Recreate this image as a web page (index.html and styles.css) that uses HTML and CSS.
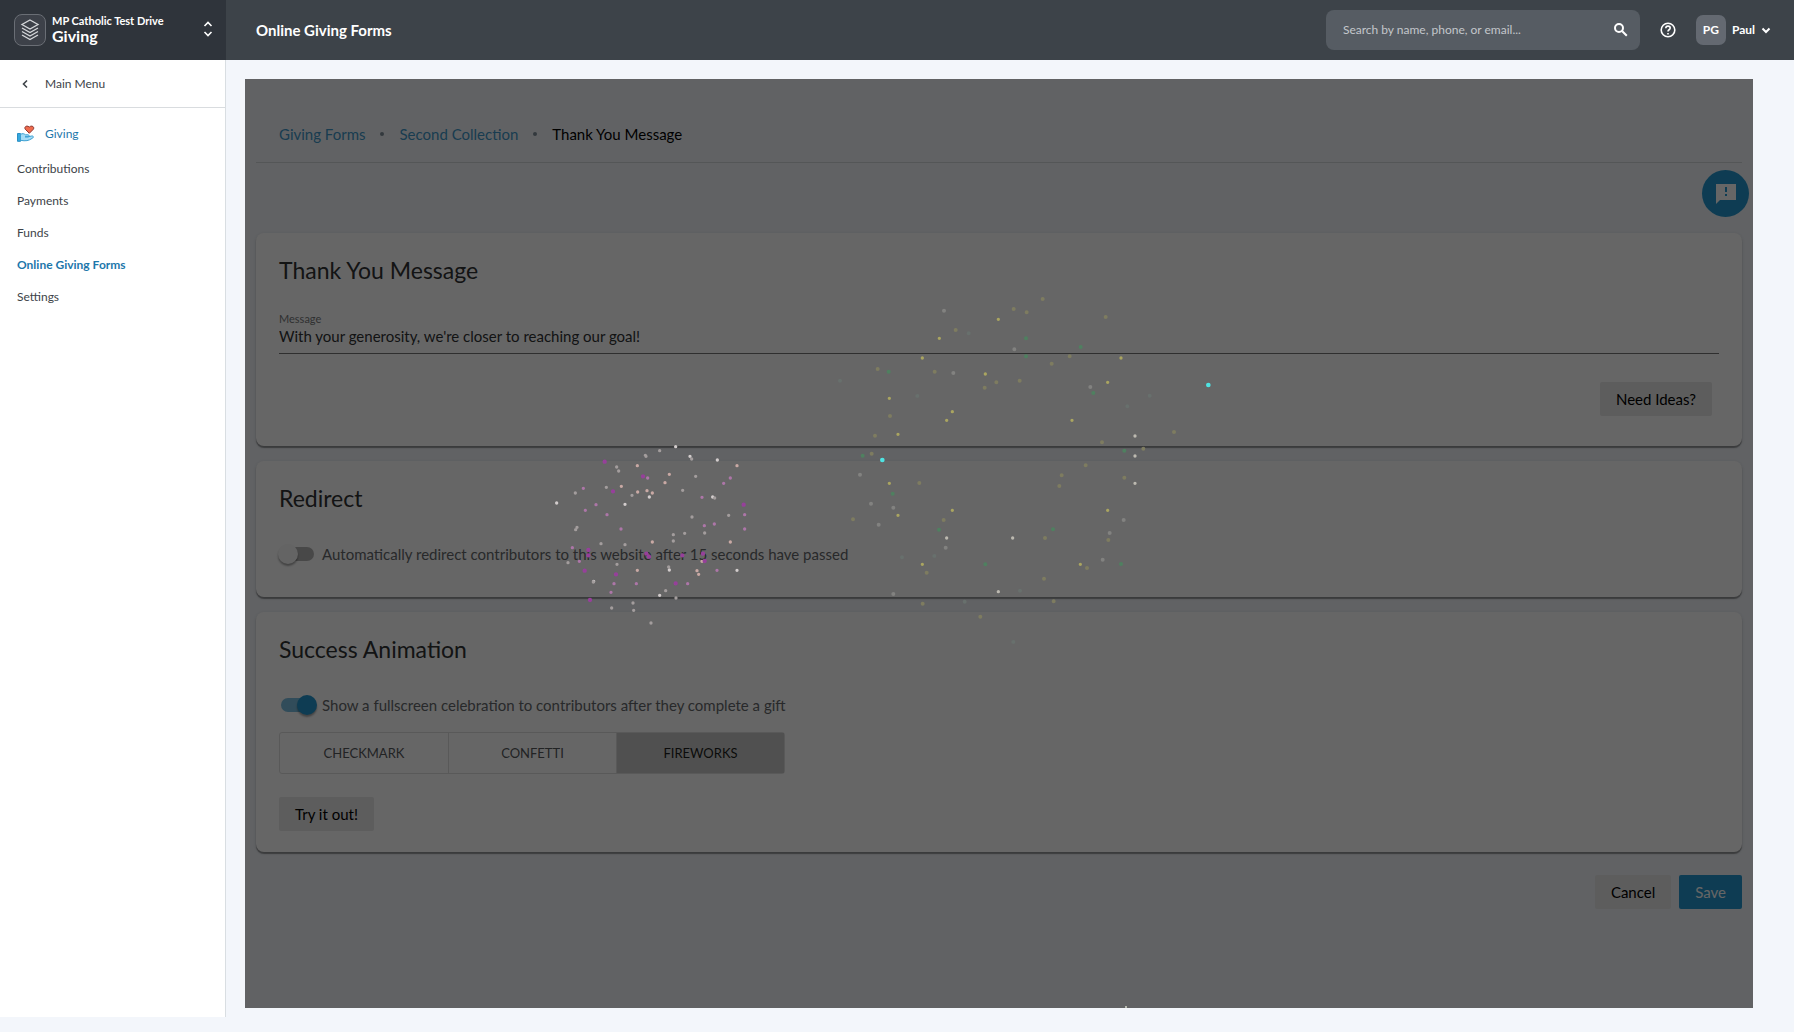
FILE: index.html
```html
<!DOCTYPE html>
<html lang="en">
<head>
<meta charset="utf-8">
<title>Online Giving Forms</title>
<meta name="viewport" content="width=device-width, initial-scale=1">
<link rel="stylesheet" href="styles.css">
</head>
<body>
<header class="topbar">
  <button class="switcher" type="button">
    <span class="switcher-logo">
      <svg width="20" height="24" viewBox="0 0 20 24" aria-hidden="true"><path d="M10 2 18 6.500 10 11 2 6.500ZM2 10l8 4.500 8-4.500M2 13.500l8 4.500 8-4.500M2 17l8 4.500 8-4.500"/></svg>
    </span>
    <span class="switcher-text"><span class="switcher-org">MP Catholic Test Drive</span><span class="switcher-app">Giving</span></span>
    <svg class="switcher-arrows" width="10" height="16" viewBox="0 0 10 16" aria-hidden="true"><path d="M1.500 5 5 1.500 8.500 5M1.500 11 5 14.500 8.500 11"/></svg>
  </button>
  <h1 class="topbar-title">Online Giving Forms</h1>
  <form class="search" role="search">
    <input class="search-input" type="search" aria-label="Search" placeholder="Search by name, phone, or email...">
    <button class="icon-button" type="submit" aria-label="Search">
      <svg width="14" height="14" viewBox="0 0 14 14" aria-hidden="true"><circle cx="5" cy="5" r="4"/><path d="m8.300 8.300 4.500 4.500"/></svg>
    </button>
  </form>
  <button class="icon-button help" type="button" aria-label="Help">
    <svg width="16" height="16" viewBox="0 0 16 16" aria-hidden="true"><circle cx="8" cy="8" r="6.800"/><path d="M5.800 6.300c0-3 4.400-2.800 4.400-.2C10.200 7.700 8 7.800 8 9.400M8 11v1.600"/></svg>
  </button>
  <button class="account" type="button">
    <span class="avatar">PG</span>
    <span class="account-name">Paul</span>
    <svg width="10" height="7" viewBox="0 0 10 7" aria-hidden="true"><path d="m1.500 1.500 3.500 3.500 3.500-3.500"/></svg>
  </button>
</header>
<div class="layout">
  <nav class="sidebar" aria-label="Giving">
    <a class="main-menu" href="#menu">
      <svg width="18" height="10" viewBox="0 0 18 10" aria-hidden="true"><path d="M10 1.500 6.500 5 10 8.500"/></svg>
      <span>Main Menu</span>
    </a>
    <a class="section-link" href="#giving">
      <svg width="18" height="18" viewBox="0 0 18 18" aria-hidden="true">
        <path d="M12.300 8.300 8.200 4.200C6.800 2 9.800-.3 12.300 2.100 14.800-.3 17.800 2 16.400 4.200Z" fill="#ef6a4c" stroke="#8b3a34"/>
        <path d="M.5 8.500h3v7.800h-3Z" fill="#35a8df" stroke="#2a8fc4"/>
        <path d="M3.500 9.500c2-1.500 3.500-.8 5 .3h2.500c1.500 0 1.500 2-.2 2H8h3.200l3.300-.8c2-.4 2.600 1.400.8 2.300-3.800 2.500-6.500 3-11.800 2Z" fill="#a5dcf6" stroke="#3a9fd2"/>
      </svg>
      <span>Giving</span>
    </a>
    <ul class="menu">
      <li><a href="#contributions">Contributions</a></li>
      <li><a href="#payments">Payments</a></li>
      <li><a href="#funds">Funds</a></li>
      <li><a class="is-active" href="#forms" aria-current="page">Online Giving Forms</a></li>
      <li><a href="#settings">Settings</a></li>
    </ul>
  </nav>
  <main class="content">
    <div class="frame">
      <nav class="crumbs" aria-label="Breadcrumb">
        <a href="#forms">Giving Forms</a>
        <span class="crumb-dot"></span>
        <a href="#second">Second Collection</a>
        <span class="crumb-dot"></span>
        <span class="crumb-current">Thank You Message</span>
      </nav>
      <button class="feedback" type="button" aria-label="Send feedback">
        <svg width="20" height="20" viewBox="0 0 20 20" aria-hidden="true"><path fill-rule="evenodd" d="M0 0h20v16H4l-4 4ZM9 3v5h2V3ZM9 10v2h2v-2Z"/></svg>
      </button>
      <form class="cards">
        <section class="card">
          <h2>Thank You Message</h2>
          <label class="field"><span>Message</span><input type="text" value="With your generosity, we're closer to reaching our goal!"></label>
          <div class="card-actions"><button class="button" type="button">Need Ideas?</button></div>
        </section>
        <section class="card">
          <h2>Redirect</h2>
          <label class="toggle"><input type="checkbox" role="switch"><span>Automatically redirect contributors to this website after 15 seconds have passed</span></label>
        </section>
        <section class="card">
          <h2>Success Animation</h2>
          <label class="toggle"><input type="checkbox" role="switch" checked><span>Show a fullscreen celebration to contributors after they complete a gift</span></label>
          <div class="segments" role="radiogroup" aria-label="Animation">
            <label><input type="radio" name="animation"><span>CHECKMARK</span></label>
            <label><input type="radio" name="animation"><span>CONFETTI</span></label>
            <label><input type="radio" name="animation" checked><span>FIREWORKS</span></label>
          </div>
          <button class="button" type="button">Try it out!</button>
        </section>
        <div class="form-actions">
          <button class="button" type="button">Cancel</button>
          <button class="button button-primary" type="submit">Save</button>
        </div>
      </form>
      <div class="celebration">
        <svg class="sparks" width="100%" height="100%" aria-hidden="true">
          <svg x="295" y="351" width="220" height="205" viewBox="0 0 660 615">
            <path class="white" d="M407 50h0M532 90h0M450 79h0M50 219h0M255 223h0M388 420h0M591 421h0M328 201h0M518 201h0M359 496h0M161 454h0"/>
            <path class="grey" d="M359 62h0M316 76h0M318 79h0M455 87h0M230 111h0M236 123h0M467 139h0M199 172h0M106 189h0M428 181h0M524 204h0M276 196h0M456 261h0M566 256h0M111 292h0M107 299h0M183 341h0M255 344h0M494 309h0M84 398h0M231 403h0M400 314h0M434 310h0M377 482h0M408 504h0M215 534h0M279 519h0M281 541h0M333 579h0M386 411h0M160 456h0M400 333h0"/>
            <path class="peach" d="M292 107h0M591 107h0M388 133h0M244 169h0M375 158h0M293 186h0M321 182h0M337 189h0M337 336h0M571 336h0M476 433h0M471 422h0M486 394h0M292 421h0"/>
            <path class="rose" d="M323 144h0M130 175h0M136 241h0M168 224h0M201 254h0M243 297h0M571 144h0M551 160h0M486 202h0M614 254h0M614 297h0M523 282h0M493 287h0M97 353h0M118 394h0M222 461h0M289 461h0M213 487h0M443 461h0M531 421h0"/>
            <path class="magenta" d="M194 95h0M309 139h0M219 184h0M611 224h0M145 360h0M145 376h0M134 422h0M228 433h0M150 510h0M319 371h0M327 380h0M427 376h0M407 460h0M489 371h0M494 393h0"/>
          </svg>
          <svg x="585" y="201" width="400" height="190" viewBox="0 0 1200 570">
            <path class="yellow" d="M505 118h0M328 175h0M277 234h0M466 282h0M178 355h0M367 395h0M350 421h0M204 463h0M726 421h0M833 307h0M873 234h0"/>
            <path class="olive" d="M638 57h0M551 87h0M590 97h0M827 111h0M377 150h0M143 267h0M314 275h0M499 307h0M464 323h0M569 302h0M665 251h0M719 229h0M180 408h0M135 467h0M125 521h0M816 487h0M1032 456h0M767 556h0M940 506h0"/>
            <path class="dim" d="M342 92h0M553 208h0M370 279h0M781 321h0"/>
            <path class="faint" d="M416 160h0M30 302h0M892 379h0M959 347h0M262 348h0"/>
            <path class="green" d="M588 175h0M588 229h0M752 201h0M176 275h0M790 339h0M98 527h0M883 512h0"/>
            <path class="pale" d="M915 468h0M915 528h0"/>
            <path class="cyan" d="M1135 315h0M157 540h0"/>
          </svg>
          <svg x="585" y="371" width="400" height="210" viewBox="0 0 1200 630">
            <path class="yellow" d="M178 100h0M204 196h0M367 181h0M833 181h0M277 343h0M751 343h0"/>
            <path class="olive" d="M268 99h0M69 208h0M341 210h0M695 76h0M688 108h0M883 83h0M835 270h0M645 264h0M771 354h0M642 386h0M671 454h0M451 500h0M290 368h0M278 461h0"/>
            <path class="dim" d="M90 74h0M123 161h0M190 173h0M146 224h0M347 293h0M881 210h0M839 249h0M818 329h0M190 432h0"/>
            <path class="faint" d="M216 322h0M313 318h0M570 422h0M404 455h0M550 576h0"/>
            <path class="green" d="M188 131h0M327 239h0M669 238h0M466 343h0M873 342h0"/>
            <path class="pale" d="M350 264h0M548 264h0M505 425h0M915 100h0"/>
          </svg>
          <path class="tip" d="M881 928h0"/>
        </svg>
      </div>
    </div>
  </main>
</div>
</body>
</html>
```

FILE: styles.css
```css
* { box-sizing: border-box; }

body {
  margin: 0;
  background: #f3f6fb;
  color: #3d4348;
  font: 12px/16px Lato, "Open Sans", sans-serif;
}

button, input { font: inherit; color: inherit; }
button { border: 0; padding: 0; background: none; cursor: pointer; }
a { color: inherit; text-decoration: none; }
svg { flex: none; }

/* Top bar */
.topbar {
  display: flex;
  align-items: center;
  height: 60px;
  background: #3d4349;
  color: #fff;
  font-weight: 700;
}
.topbar svg { fill: none; stroke: #fff; stroke-width: 2; }

.switcher {
  display: flex;
  align-items: center;
  width: 226px;
  height: 60px;
  padding: 0 13px 0 14px;
  background: #2f343b;
  text-align: left;
}
.switcher-logo {
  display: grid;
  place-items: center;
  width: 32px;
  height: 32px;
  border: 1px solid #6a6e75;
  border-radius: 8px;
  background: #3d4149;
}
.topbar .switcher-logo svg { stroke: #d5d7da; stroke-width: 1.3; }
.switcher-text { display: flex; flex: 1; flex-direction: column; margin-left: 6px; padding-bottom: 3px; }
.switcher-org { font-size: 11px; line-height: 14px; }
.switcher-app { font-size: 16px; line-height: 16px; }
.topbar .switcher-arrows { margin-bottom: 3px; stroke-width: 1.6; }

.topbar-title { flex: 1; margin: 0 0 0 30px; font-size: 15px; line-height: 20px; }

.search {
  display: flex;
  align-items: center;
  width: 314px;
  height: 40px;
  padding: 0 12px 0 17px;
  border-radius: 8px;
  background: #565c63;
}
.search-input { flex: 1; min-width: 0; padding: 0; border: 0; outline: 0; background: none; font-weight: 400; }
.search-input::placeholder { color: #c3c7cb; opacity: 1; }
.icon-button { display: grid; place-items: center; }
.help { margin: 0 20px; }
.topbar .help svg { stroke-width: 1.6; }
.account { display: flex; align-items: center; gap: 6px; margin-right: 23px; }
.avatar { width: 30px; border-radius: 7px; background: #646971; line-height: 30px; }

/* Side navigation */
.layout { display: flex; align-items: flex-start; }

.sidebar {
  width: 226px;
  min-height: calc(100vh - 75px);
  border-right: 1px solid #d9dee2;
  background: #fff;
}
.main-menu, .section-link { display: flex; align-items: center; gap: 10px; padding: 0 17px; }
.main-menu { height: 48px; border-bottom: 1px solid #d9dcdf; }
.main-menu svg { fill: none; stroke: #3d4348; stroke-width: 1.6; }
.section-link { height: 52px; color: #1d77ab; }
.menu { margin: 0; padding: 0; list-style: none; }
.menu a { display: block; padding: 0 17px; line-height: 32px; }
.menu li:first-child { margin-top: -7px; }
.menu .is-active { color: #1d77ab; font-weight: 700; }

/* Page */
.content { flex: 1; min-width: 0; padding: 19px 41px 0 19px; }

.frame {
  position: relative;
  min-height: calc(100vh - 103px);
  padding: 0 11px 24px;
  background: #f3f6fb;
  color: #303234;
  font-size: 15px;
  line-height: 20px;
}

.crumbs {
  display: flex;
  align-items: center;
  gap: 15px;
  height: 84px;
  padding: 26px 23px 0;
  border-bottom: 1px solid #d2d6d9;
}
.crumbs a { color: #3f97c8; }
.crumb-current { color: #000; }
.crumb-dot { width: 4px; height: 4px; border-radius: 2px; background: #7f8d99; }

.feedback {
  position: absolute;
  top: 91px;
  right: 4px;
  display: grid;
  place-items: center;
  width: 47px;
  height: 47px;
  border-radius: 50%;
  background: #2397cf;
}
.feedback svg { fill: #fff; }

.cards { display: flex; flex-direction: column; gap: 15px; margin-top: 70px; }
.card {
  padding: 21px 23px;
  border-radius: 8px;
  background: #fff;
  box-shadow: 0 2px 1px rgba(0, 0, 0, .35), 0 1px 4px rgba(0, 0, 0, .12);
}
.card h2 { margin: 0; font-size: 23px; font-weight: 400; line-height: 32px; }

.field { display: block; margin-top: 26px; }
.field span { display: block; color: #77797c; font-size: 11px; line-height: 14px; }
.field input {
  display: block;
  width: 100%;
  height: 28px;
  padding: 0 0 8px;
  border: 0;
  border-bottom: 1px solid #777;
  outline: 0;
  background: none;
}
.card-actions { display: flex; justify-content: flex-end; margin: 28px 7px 9px; }

.button {
  height: 34px;
  padding: 0 16px;
  border-radius: 2px;
  background: #e8e8e8;
  color: #000;
}
.button-primary { background: #2397cf; color: #fff; }

.toggle { display: flex; align-items: center; gap: 8px; height: 20px; margin: 30px 0 12px; color: #65686b; }
.toggle input {
  display: flex;
  align-items: center;
  appearance: none;
  width: 33px;
  height: 14px;
  margin: 0 0 0 2px;
  border-radius: 7px;
  background: #b5b5b5;
}
.toggle input::before {
  content: "";
  flex: none;
  width: 20px;
  height: 20px;
  margin: 0 -3px;
  border-radius: 50%;
  background: #fafafa;
  box-shadow: 0 2px 2px rgba(0, 0, 0, .35);
}
.toggle input:checked { justify-content: flex-end; background: #7cbfe0; }
.toggle input:checked::before { background: #2397cf; }

.segments {
  display: grid;
  grid-template-columns: repeat(3, 1fr);
  width: 506px;
  margin: 17px 0 23px;
  border: 1px solid #dedede;
  border-radius: 3px;
  color: #55585b;
  font-size: 13px;
  line-height: 40px;
  text-align: center;
}
.segments label { position: relative; }
.segments label + label { border-left: 1px solid #dedede; }
.segments input { position: absolute; opacity: 0; }
.segments span { display: block; }
.segments input:checked + span { background: #c9c9c9; color: #1c1e20; }

.form-actions { display: flex; justify-content: flex-end; gap: 8px; margin-top: 8px; }

/* Fireworks drawn over the dimmed form */
.celebration { position: absolute; inset: 0; background: rgba(0, 0, 0, .6); pointer-events: none; }
.sparks { display: block; overflow: hidden; }
.sparks path { fill: none; stroke-width: 10; stroke-linecap: round; }
.sparks .white { stroke: #d2cccc; }
.sparks .grey { stroke: #a39d9d; }
.sparks .peach { stroke: #c9a9a4; }
.sparks .rose { stroke: #ad76a8; }
.sparks .magenta { stroke: #96409a; stroke-width: 13; }
.sparks .yellow { stroke: #aaa560; }
.sparks .olive { stroke: #7e7c60; stroke-width: 12; }
.sparks .dim { stroke: #828280; stroke-width: 12; }
.sparks .faint { stroke: #68706d; stroke-width: 12; }
.sparks .green { stroke: #4f8060; stroke-width: 12; }
.sparks .pale { stroke: #bcb9b0; }
.sparks .cyan { stroke: #4fe3e2; stroke-width: 14; }
.sparks .tip { stroke: #d5d8c8; stroke-width: 2; }
```
